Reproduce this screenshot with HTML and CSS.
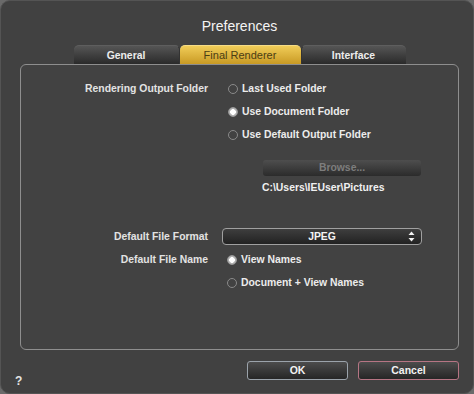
FILE: index.html
```html
<!DOCTYPE html>
<html>
<head>
<meta charset="utf-8">
<link rel="stylesheet" href="styles.css">
</head>
<body>
<div class="window">
  <div class="title">Preferences</div>
  <div class="tabs">
    <div class="tab tab-general">General</div>
    <div class="tab tab-active">Final Renderer</div>
    <div class="tab tab-interface">Interface</div>
  </div>
  <div class="panel">
    <div class="grid">
      <div class="label">Rendering Output Folder</div>
      <div class="group">
        <div class="radio-row"><span class="radio"></span>Last Used Folder</div>
        <div class="radio-row"><span class="radio checked"></span>Use Document Folder</div>
        <div class="radio-row"><span class="radio"></span>Use Default Output Folder</div>
        <div class="browse">Browse...</div>
        <div class="path">C:\Users\IEUser\Pictures</div>
      </div>

      <div class="label label-format">Default File Format</div>
      <div class="select">
        <span class="select-text">JPEG</span>
        <svg class="arrows" width="7" height="11" viewBox="0 0 7 11"><path d="M3.5 0.5 L6.5 4 L0.5 4 Z" fill="#f2f2f2"/><path d="M0.5 7 L6.5 7 L3.5 10.5 Z" fill="#f2f2f2"/></svg>
      </div>

      <div class="label label-name">Default File Name</div>
      <div class="group group-name">
        <div class="radio-row"><span class="radio checked"></span>View Names</div>
        <div class="radio-row"><span class="radio"></span>Document + View Names</div>
      </div>
    </div>
  </div>
  <div class="footer">
    <div class="help">?</div>
    <div class="buttons">
      <div class="btn btn-ok">OK</div>
      <div class="btn btn-cancel">Cancel</div>
    </div>
  </div>
</div>
</body>
</html>
```
FILE: styles.css
```css
html, body {
  margin: 0;
  padding: 0;
  background: #6a6a6a;
}
body {
  width: 474px;
  height: 394px;
  overflow: hidden;
  font-family: "Liberation Sans", Arial, sans-serif;
  font-size: 10.4px;
  font-weight: bold;
  color: #e8e8e8;
}
.window {
  box-sizing: border-box;
  width: 474px;
  height: 394px;
  background: #414141;
  border: 1px solid #545454;
  border-radius: 10px;
  padding: 0 14px 0 19px;
  display: flex;
  flex-direction: column;
}
.title {
  font-size: 14px;
  font-weight: normal;
  color: #f4f4f4;
  text-align: center;
  line-height: 16px;
  margin-top: 17px;
}
.tabs {
  display: flex;
  justify-content: center;
  margin-top: 11px;
  height: 19px;
}
.tab {
  box-sizing: border-box;
  height: 19px;
  text-align: center;
  color: #ececec;
  background: linear-gradient(#555555, #2a2a2a);
  border-top: 1px solid #5e5e5e;
  border-radius: 5px 5px 0 0;
  line-height: 19px;
}
.tab-general { width: 106px; border-right: 1px solid #333; }
.tab-interface { width: 105px; border-left: 1px solid #333; }
.tab-active {
  width: 121px;
  background: linear-gradient(#f0cc58, #c99a24);
  border-top: 1px solid #f6dc86;
  color: #4b3d14;
  font-weight: normal;
  font-size: 11px;
}
.panel {
  box-sizing: border-box;
  height: 286px;
  border: 1px solid #8e8e8e;
  border-radius: 6px;
  background: #424242;
  padding-top: 12px;
}
.grid {
  display: grid;
  grid-template-columns: 187px 1fr;
  column-gap: 14px;
  align-items: start;
}
.label {
  text-align: right;
  line-height: 23px;
  color: #e2e2e2;
}
.group {
  display: flex;
  flex-direction: column;
  padding-left: 6px;
}
.radio-row {
  display: flex;
  align-items: center;
  height: 23px;
  color: #ececec;
}
.radio {
  box-sizing: border-box;
  width: 10px;
  height: 10px;
  border-radius: 50%;
  border: 1px solid #8a8a8a;
  margin-right: 4px;
  flex: none;
}
.radio.checked {
  background: radial-gradient(circle, #ffffff 0 2.6px, #bdbdbd 3px, #8a8a8a 100%);
  border-color: #9a9a9a;
}
.browse {
  box-sizing: border-box;
  margin-top: 14px;
  margin-left: 35px;
  width: 158px;
  height: 16px;
  line-height: 16px;
  text-align: center;
  color: #7d7d7d;
  background: linear-gradient(#4e4e4e, #2b2b2b);
  border-radius: 3px;
}
.path {
  margin-top: 5px;
  margin-left: 34px;
  line-height: 14px;
  color: #f0f0f0;
}
.label-format {
  margin-top: 33px;
  line-height: 17px;
}
.select {
  box-sizing: border-box;
  margin-top: 33px;
  width: 200px;
  height: 17px;
  border: 1px solid #a0a0a0;
  border-radius: 4px;
  background: linear-gradient(#3e3e3e, #222222);
  display: flex;
  align-items: center;
  justify-content: center;
  position: relative;
}
.select-text {
  color: #f4f4f4;
}
.arrows {
  position: absolute;
  right: 6px;
  top: 2px;
}
.label-name {
  margin-top: 3px;
}
.group-name {
  margin-top: 3px;
  padding-left: 5px;
}
.footer {
  display: flex;
  justify-content: space-between;
  align-items: flex-start;
  margin-top: 11px;
}
.help {
  margin-left: -5px;
  margin-top: 13px;
  font-size: 12px;
  color: #e4e4e4;
}
.buttons {
  display: flex;
  gap: 10px;
}
.btn {
  box-sizing: border-box;
  width: 101px;
  height: 19px;
  line-height: 17px;
  text-align: center;
  border-radius: 3px;
  background: linear-gradient(#4c4c4c, #262626);
  color: #f2f2f2;
  font-size: 10.5px;
}
.btn-ok { border: 1px solid #9ba3ab; }
.btn-cancel { border: 1px solid #b67584; }
```
